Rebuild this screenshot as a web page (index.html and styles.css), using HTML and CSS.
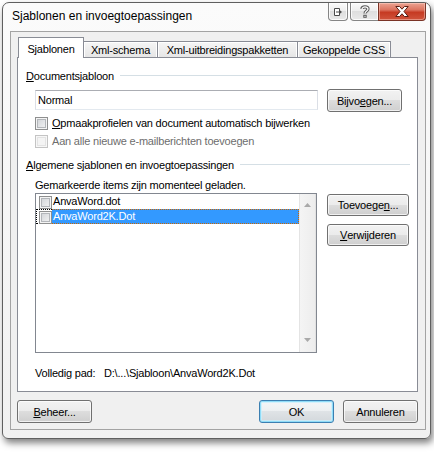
FILE: index.html
```html
<!DOCTYPE html>
<html>
<head>
<meta charset="utf-8">
<title>Sjablonen en invoegtoepassingen</title>
<link rel="stylesheet" href="styles.css">
</head>
<body>
<div class="window">
  <div class="titlebar">
    <span class="title">Sjablonen en invoegtoepassingen</span>
    <div class="caption">
      <div class="cbtn cbtn-snap">
        <svg width="10" height="10" viewBox="0 0 10 10"><path d="M1.5 1.5h5v7h-5z" fill="#fff" stroke="#4a4a4a"/><path d="M3 5h3.5" stroke="#4a4a4a" fill="none"/><path d="M6 2.5l3 2.5-3 2.5z" fill="#4a4a4a"/></svg>
      </div>
      <div class="cbtn cbtn-help">
        <svg width="10" height="13" viewBox="0 0 10 13"><g fill="none"><path d="M2 4C2 1.2 8 1.2 8 4C8 6 5 6 5 8.5" stroke="#5a5a5a" stroke-width="3.2"/><path d="M2 4C2 1.2 8 1.2 8 4C8 6 5 6 5 8.5" stroke="#fff" stroke-width="1.2"/></g><rect x="3.3" y="9.8" width="3.4" height="3" fill="#5a5a5a"/><rect x="4.4" y="10.8" width="1.2" height="1" fill="#fff"/></svg>
      </div>
      <div class="cbtn cbtn-close">
        <svg width="14" height="11" viewBox="0 0 14 11"><path d="M0.8 0.5H4.6L7 3.2L9.4 0.5H13.2L9 5.5L13.2 10.5H9.4L7 7.8L4.6 10.5H0.8L5 5.5Z" fill="#fff" stroke="#5a1d12" stroke-width="1"/></svg>
      </div>
    </div>
  </div>
  <div class="client">
    <div class="tabs">
      <div class="tab tab-sel">Sjablonen</div>
      <div class="tab tab-xml">Xml-schema</div>
      <div class="tab tab-pak">Xml-uitbreidingspakketten</div>
      <div class="tab tab-css">Gekoppelde CSS</div>
    </div>
    <div class="panel">
      <div class="group-head g1"><span><u>D</u>ocumentsjabloon</span><i class="rule"></i></div>
      <div class="row-doc">
        <div class="textbox">Normal</div>
        <div class="btn btn-add">Bijvo<u>e</u>gen...</div>
      </div>
      <div class="chkrow c1"><span class="chk"></span><span class="lbl"><u>O</u>pmaakprofielen van document automatisch bijwerken</span></div>
      <div class="chkrow c2 disabled"><span class="chk chk-dis"></span><span class="lbl">Aan alle nieuwe e-mailberichten toevoegen</span></div>
      <div class="group-head g2"><span><u>A</u>lgemene sjablonen en invoegtoepassingen</span><i class="rule"></i></div>
      <div class="note">Gemarkeerde items zijn momenteel geladen.</div>
      <div class="row-list">
        <div class="listbox">
          <div class="items">
            <div class="item"><span class="ichk"><span class="chk"></span></span><span class="itext">AnvaWord.dot</span></div>
            <div class="item item-focus"><span class="ichk"><span class="chk"></span></span><span class="itext">AnvaWord2K.Dot</span></div>
          </div>
          <div class="vscroll">
            <svg width="7" height="4" viewBox="0 0 7 4"><path d="M0 4L3.5 0L7 4Z" fill="#a9a9a9"/></svg>
            <svg width="7" height="4" viewBox="0 0 7 4"><path d="M0 0L3.5 4L7 0Z" fill="#a9a9a9"/></svg>
          </div>
        </div>
        <div class="side-btns">
          <div class="btn btn-wide">Toevoege<u>n</u>...</div>
          <div class="btn btn-wide btn-del"><u>V</u>erwijderen</div>
        </div>
      </div>
      <div class="path"><span class="path-lbl">Volledig pad:</span><span>D:\...\Sjabloon\AnvaWord2K.Dot</span></div>
    </div>
    <div class="footer">
      <div class="btn btn-std"><u>B</u>eheer...</div>
      <div class="spacer"></div>
      <div class="btn btn-std btn-default">OK</div>
      <div class="btn btn-std btn-cancel">Annuleren</div>
    </div>
  </div>
</div>
</body>
</html>
```
FILE: styles.css
```css
* { box-sizing: border-box; }
html, body { margin: 0; padding: 0; background: #ffffff; }
body {
  width: 434px;
  height: 456px;
  overflow: hidden;
  font-family: "Liberation Sans", Arial, sans-serif;
  font-size: 11px;
  letter-spacing: -0.2px;
  color: #000;
}
u { text-decoration: underline; text-underline-offset: 1px; }

.window {
  margin: 2px 0 0 2px;
  width: 429px;
  height: 437px;
  border: 1px solid #5f5f5f;
  border-radius: 7px 7px 6px 6px;
  background: linear-gradient(#fbfbfb, #f1f1f1);
  box-shadow: 2px 4px 7px rgba(0, 0, 0, 0.5);
  display: flex;
  flex-direction: column;
}

.titlebar {
  height: 28px;
  flex: none;
  display: flex;
  justify-content: space-between;
  align-items: flex-start;
  padding: 0 4px 0 9px;
}
.title {
  font-size: 12px;
  letter-spacing: 0;
  line-height: 14px;
  margin-top: 6px;
}
.caption { display: flex; align-items: flex-start; }
.cbtn {
  height: 18px;
  border: 1px solid #858585;
  border-top: 0;
  background: linear-gradient(#fbfbfb 0, #ececec 50%, #dedede 50%, #e9e9e9 100%);
  box-shadow: inset 0 0 0 1px rgba(255, 255, 255, 0.8);
  display: flex;
  align-items: center;
  justify-content: center;
}
.cbtn-snap { width: 20px; margin-right: 2px; border-radius: 0 0 4px 4px; }
.cbtn-help { width: 29px; border-radius: 0 0 0 4px; }
.cbtn-close {
  width: 48px;
  margin-left: -1px;
  border-radius: 0 0 4px 0;
  border-color: #7a3326;
  background: linear-gradient(#eca392 0, #dc7460 40%, #c63a22 55%, #d0543c 100%);
  box-shadow: inset 0 0 0 1px rgba(255, 220, 210, 0.45);
}

.client {
  margin: 0 4px 0 7px;
  width: 416px;
  height: 399px;
  flex: none;
  border: 1px solid #a3a3a3;
  background: #f0f0f0;
  display: flex;
  flex-direction: column;
}

.tabs {
  display: flex;
  align-items: flex-end;
  height: 20px;
  margin: 5px 0 0 7px;
  position: relative;
  z-index: 1;
}
.tab {
  height: 16px;
  border: 1px solid #898c95;
  border-bottom: 0;
  margin-left: -1px;
  background: linear-gradient(#f6f6f6, #e6e6e6);
  box-shadow: inset 1px 1px 0 #fff, inset -1px 0 0 #fff;
  text-align: center;
  line-height: 13px;
  padding-top: 2px;
  white-space: nowrap;
}
.tab-sel {
  margin-left: 0;
  width: 66px;
  height: 21px;
  margin-bottom: -1px;
  background: #fff;
  box-shadow: none;
  padding-top: 5px;
  position: relative;
  z-index: 2;
}
.tab-xml { width: 75px; }
.tab-pak { width: 141px; }
.tab-css { width: 94px; }

.panel {
  margin-left: 6px;
  width: 401px;
  height: 335px;
  flex: none;
  border: 1px solid #898c95;
  background: #fff;
  display: flex;
  flex-direction: column;
}

.group-head {
  display: flex;
  align-items: center;
  height: 14px;
  line-height: 14px;
  padding: 0 7px 0 8px;
  white-space: nowrap;
}
.g1 { margin-top: 11px; }
.g2 { margin-top: 10px; }
.rule {
  flex: 1;
  height: 1px;
  margin: 0 0 1px 6px;
  background: #d5dfe5;
}

.row-doc {
  display: flex;
  align-items: flex-start;
  margin-top: 6px;
  padding-left: 17px;
  height: 23px;
}
.textbox {
  width: 283px;
  height: 20px;
  margin-top: 1px;
  border: 1px solid #abadb3;
  border-left-color: #dbdfe6;
  border-right-color: #dbdfe6;
  border-bottom-color: #e3e9ef;
  background: #fff;
  padding-left: 2px;
  line-height: 18px;
}

.btn {
  height: 23px;
  border: 1px solid #707070;
  border-radius: 3px;
  background: linear-gradient(#f2f2f2 0, #ebebeb 50%, #dddddd 50%, #cfcfcf 100%);
  box-shadow: inset 0 0 0 1px rgba(255, 255, 255, 0.7);
  display: flex;
  align-items: center;
  justify-content: center;
  white-space: nowrap;
  flex: none;
}
.btn-add { width: 75px; margin-left: 9px; }

.chkrow {
  display: flex;
  align-items: center;
  height: 13px;
  line-height: 13px;
  padding-left: 17px;
}
.c1 { margin-top: 5px; }
.c2 { margin-top: 5px; }
.lbl { margin-left: 4px; white-space: nowrap; }
.disabled { color: #6d6d6d; }

.chk {
  display: block;
  width: 13px;
  height: 13px;
  flex: none;
  border: 1px solid #8e8f8f;
  background: linear-gradient(135deg, #cdd0d4, #f6f6f6);
  box-shadow: inset 0 0 0 1px #f4f4f4, inset 0 0 0 2px #b3b6ba;
}
.chk-dis {
  border-color: #c4c4c4;
  background: #f4f4f4;
  box-shadow: inset 0 0 0 1px #f7f7f7, inset 0 0 0 2px #e3e3e3;
}

.note {
  margin-top: 6px;
  height: 14px;
  line-height: 14px;
  padding-left: 17px;
}

.row-list {
  display: flex;
  align-items: flex-start;
  margin-top: 1px;
  padding-left: 17px;
}
.listbox {
  width: 282px;
  height: 160px;
  border: 1px solid #828790;
  background: #fff;
  display: flex;
}
.items { flex: 1; }
.item {
  display: flex;
  height: 15px;
}
.ichk {
  width: 16px;
  height: 15px;
  flex: none;
  padding: 2px 0 0 3px;
}
.itext {
  flex: 1;
  padding-left: 1px;
  line-height: 15px;
  white-space: nowrap;
}
.item-focus .ichk {
  border: 1px dotted #000;
  border-right: 0;
  padding: 1px 0 0 2px;
}
.item-focus .itext {
  background: #3399ff;
  color: #fff;
  border: 1px dotted #cc6600;
  border-left: 0;
  line-height: 13px;
}
.vscroll {
  width: 17px;
  flex: none;
  background: linear-gradient(to right, #e4e4e4 0, #e4e4e4 1px, #f4f4f4 1px, #ededed 16px, #e2e2e2 16px);
  display: flex;
  flex-direction: column;
  align-items: center;
  justify-content: space-between;
  padding: 9px 0 10px;
}
.side-btns {
  display: flex;
  flex-direction: column;
  margin: 1px 0 0 10px;
}
.btn-wide { width: 82px; height: 22px; }
.btn-del { margin-top: 8px; }

.path {
  margin-top: 13px;
  height: 14px;
  line-height: 14px;
  padding-left: 17px;
  display: flex;
  white-space: nowrap;
}
.path-lbl { width: 69px; flex: none; }

.footer {
  display: flex;
  margin: 8px 7px 0 6px;
}
.spacer { flex: 1; }
.btn-std { width: 75px; }
.btn-default {
  border-color: #3c7fb1;
  box-shadow: inset 0 0 0 1px #8fdcf8, inset 0 0 0 2px rgba(200, 240, 253, 0.7);
  background: linear-gradient(#f4f6f8 0, #eceff1 50%, #dfe3e6 50%, #d3d8dc 100%);
}
.btn-cancel { margin-left: 9px; }
```
